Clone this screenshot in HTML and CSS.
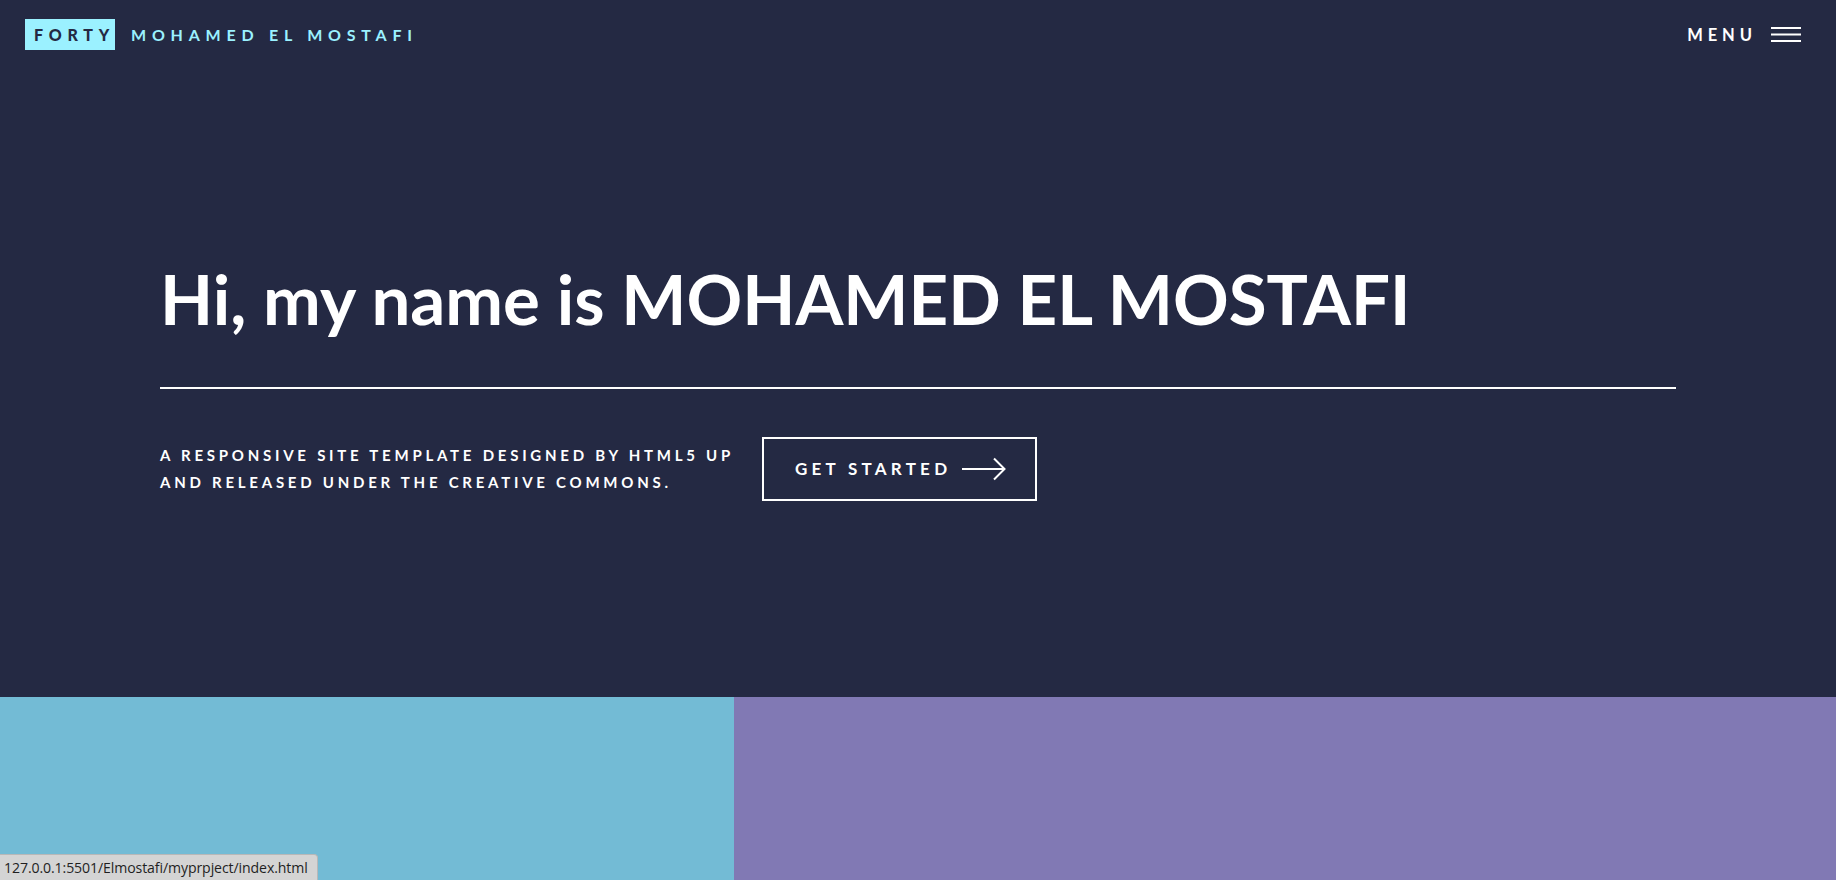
FILE: index.html
```html
<!DOCTYPE html>
<html lang="en">
<head>
<meta charset="utf-8">
<title>Forty</title>
<link rel="stylesheet" href="styles.css">
</head>
<body>
<header class="site-header">
  <a class="logo" href="#"><strong class="logo-mark">FORTY</strong><span class="logo-name">MOHAMED EL MOSTAFI</span></a>
  <a class="menu-toggle" href="#">
    <span class="menu-label">MENU</span>
    <svg class="menu-icon" width="30" height="16" viewBox="0 0 30 16" aria-hidden="true">
      <rect x="0" y="0" width="30" height="2" fill="#ffffff"/>
      <rect x="0" y="6.5" width="30" height="2" fill="#ffffff"/>
      <rect x="0" y="13" width="30" height="2" fill="#ffffff"/>
    </svg>
  </a>
</header>

<section class="banner">
  <div class="banner-inner">
    <h1 class="banner-title">Hi, my name is MOHAMED EL MOSTAFI</h1>
    <div class="banner-content">
      <p class="banner-text">A responsive site template designed by HTML5 UP<br>and released under the Creative Commons.</p>
      <a class="button" href="#">
        <span class="button-label">GET STARTED</span>
        <svg class="button-arrow" width="44" height="24" viewBox="0 0 44 24" aria-hidden="true">
          <path d="M0 12 H42 M32 1.5 L42.5 12 L32 22.5" fill="none" stroke="#ffffff" stroke-width="2"/>
        </svg>
      </a>
    </div>
  </div>
</section>

<section class="tiles">
  <article class="tile tile-blue"></article>
  <article class="tile tile-purple"></article>
</section>

<div class="status-bar">127.0.0.1:5501/Elmostafi/myprpject/index.html</div>
</body>
</html>
```

FILE: styles.css
```css
* { box-sizing: border-box; }

html, body {
  margin: 0;
  padding: 0;
}

body {
  background: #242943;
  color: #ffffff;
  font-family: Lato, "Liberation Sans", sans-serif;
  overflow: hidden;
  height: 880px;
}

a { text-decoration: none; color: inherit; }

/* Header */
.site-header {
  height: 69px;
  display: flex;
  align-items: center;
  justify-content: space-between;
  padding: 0 35px 0 25px;
}

.logo {
  display: flex;
  align-items: center;
  font-size: 16px;
  font-weight: 700;
  letter-spacing: 0.36em;
}

.logo-mark {
  display: inline-block;
  background: #9bf1ff;
  color: #242943;
  height: 31px;
  line-height: 31px;
  padding: 0 0 0 9px;
  margin-right: 16px;
}

.logo-name {
  color: #9bf1ff;
}

.menu-toggle {
  display: flex;
  align-items: center;
  font-size: 16.5px;
  font-weight: 700;
  letter-spacing: 0.3em;
  color: #ffffff;
}

.menu-label { margin-right: 14px; }

.menu-icon { display: block; }

/* Banner */
.banner {
  height: 628px;
  padding: 189px 160px 0 160px;
}

.banner-title {
  margin: 0;
  font-size: 69px;
  line-height: 1.2;
  font-weight: 700;
  letter-spacing: 0;
  padding-bottom: 46px;
  border-bottom: 2px solid #ffffff;
}

.banner-content {
  display: flex;
  align-items: center;
  margin-top: 48px;
}

.banner-text {
  margin: 0;
  width: 580px;
  white-space: nowrap;
  font-size: 15px;
  font-weight: 700;
  letter-spacing: 0.25em;
  line-height: 27px;
  text-transform: uppercase;
}

.button {
  margin-left: 22px;
  width: 275px;
  height: 64px;
  border: 2px solid #ffffff;
  display: flex;
  align-items: center;
  padding-left: 31px;
  font-size: 17px;
  font-weight: 700;
  letter-spacing: 0.25em;
}

.button-label { margin-right: 11px; }

.button-arrow { display: block; }

/* Tiles */
.tiles {
  display: flex;
  height: 300px;
}

.tile-blue {
  width: 40%;
  background: #73bbd5;
}

.tile-purple {
  width: 60%;
  background: #8179b4;
}

/* Browser status bubble */
.status-bar {
  position: fixed;
  left: 0;
  bottom: 0;
  height: 26px;
  width: 318px;
  padding: 0 0 0 4px;
  background: #d4d4d4;
  border-top: 1px solid #b8b8b8;
  border-right: 1px solid #b8b8b8;
  border-top-right-radius: 4px;
  color: #1f1f1f;
  font-family: "Open Sans", "Liberation Sans", sans-serif;
  font-size: 14.1px;
  line-height: 25px;
  white-space: nowrap;
  letter-spacing: -0.1px;
}
```
